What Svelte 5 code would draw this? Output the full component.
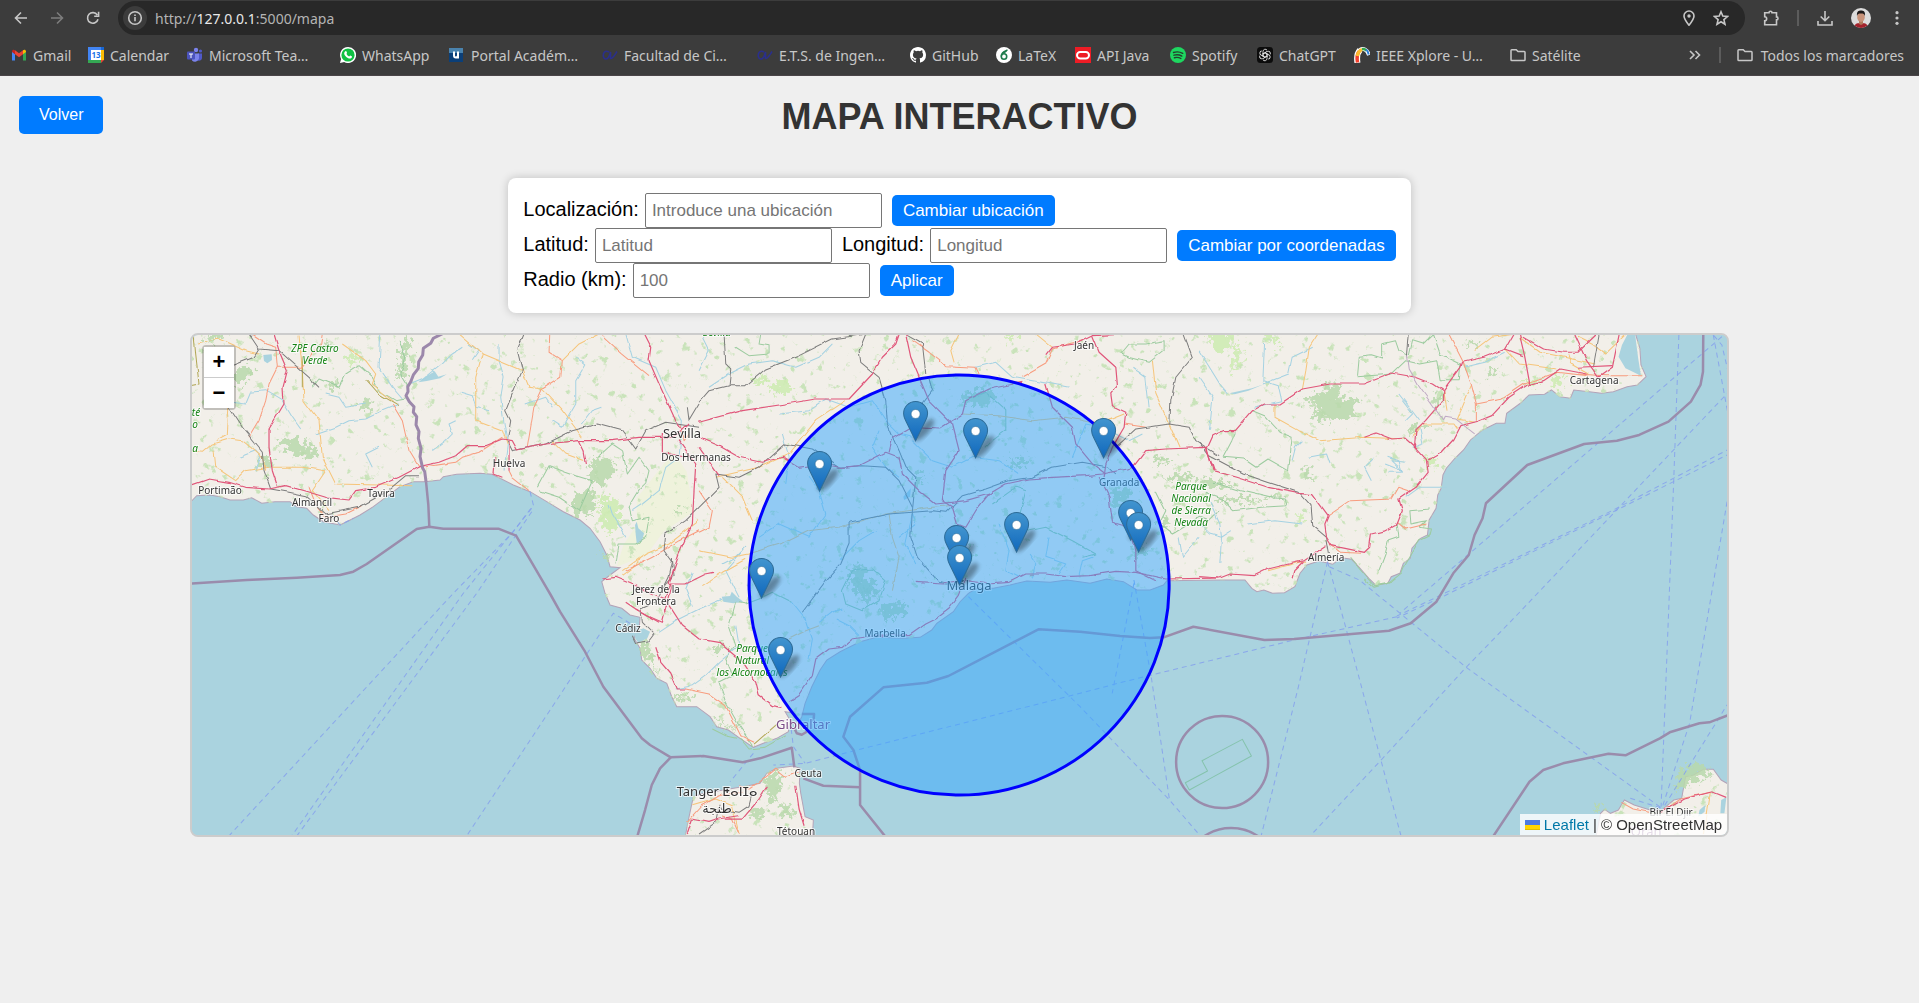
<script>
  const bookmarks = [
    { icon: 'gmail', label: 'Gmail' },
    { icon: 'calendar', label: 'Calendar' },
    { icon: 'teams', label: 'Microsoft Tea…' },
    { icon: 'whatsapp', label: 'WhatsApp' },
    { icon: 'portal', label: 'Portal Académ…' },
    { icon: 'uma', label: 'Facultad de Ci…' },
    { icon: 'uma', label: 'E.T.S. de Ingen…' },
    { icon: 'github', label: 'GitHub' },
    { icon: 'latex', label: 'LaTeX' },
    { icon: 'oracle', label: 'API Java' },
    { icon: 'spotify', label: 'Spotify' },
    { icon: 'chatgpt', label: 'ChatGPT' },
    { icon: 'ieee', label: 'IEEE Xplore - U…' },
    { icon: 'folder', label: 'Satélite' }
  ];

  // Survey sheets: origin and units per map pixel. All geometry is stored in sheet units.
  const sheets = {
    W: [180, 325, 3, 3],
    C: [700, 325, 3, 3],
    E: [1200, 325, 2.904, 3],
    S: [560, 560, 3, 3],
    D: [1120, 580, 2.529, 3]
  };
  // "W 1,2 3,4 S 5,6" -> "x,y x,y x,y" in map units
  function project(text) {
    let s = sheets.W;
    const out = [];
    for (const token of text.trim().split(/\s+/)) {
      if (sheets[token]) s = sheets[token];
      else {
        const [x, y] = token.split(',').map(Number);
        out.push(`${(s[0] + x / s[2]).toFixed(1)},${(s[1] + y / s[3]).toFixed(1)}`);
      }
    }
    return out.join(' ');
  }

  const land = [
    'W -60,-60 -60,520 33,530 50,512 90,510 120,515 150,525 190,525 215,518 245,535 285,530 330,530 350,545 380,550 400,570 430,590 480,600 500,590 540,570 580,545 620,515 660,485 700,470 735,470 780,465 790,455 830,448 900,445 935,448 960,460 1000,480 1050,500 1100,530 1150,560 1200,585 1230,610 1260,650 1280,690 1290,725 1320,728 1290,750 1265,770 S 125,65 135,100 150,135 185,145 210,165 240,172 238,200 222,235 240,265 245,300 270,325 290,355 320,370 335,410 350,440 410,440 450,470 470,500 505,510 540,535 580,562 610,550 650,535 685,515 690,480 675,455 705,460 715,490 725,470 735,430 755,380 780,330 800,300 840,275 900,245 950,232 1030,235 1080,232 1115,210 1130,190 1180,155 1200,125 1225,100 C 830,790 880,790 930,780 980,768 1050,772 1100,765 1170,775 1220,762 1270,770 1310,795 1350,795 1390,780 1400,767 E 60,765 130,765 150,790 165,800 185,795 210,805 245,803 275,785 290,745 310,720 345,708 385,718 410,698 440,703 460,725 490,760 510,780 545,775 555,755 580,745 590,715 610,700 615,670 640,640 660,630 665,585 685,550 690,510 700,490 705,450 715,430 740,400 765,375 785,345 820,315 860,295 885,295 890,265 930,235 955,210 1000,208 1020,195 1045,215 1075,220 1085,195 1130,200 1165,205 1200,200 1240,185 1270,180 1295,155 1280,120 1277,70 1265,30 1265,-60',
    'S 370,860 385,780 400,710 430,700 490,690 560,678 600,670 620,640 650,625 700,618 720,625 718,670 722,700 735,770 760,780 755,860',
    'D 1200,790 1215,700 1225,688 1240,700 1260,690 1275,660 1300,675 1340,690 1370,690 1400,660 1420,655 1430,590 1450,585 1475,568 1500,568 1520,600 1560,628 1560,790'
  ];
  const water = [
    'E 1245,20 1225,60 1215,95 1235,130 1280,152 1272,100 1262,20',
    'S 225,215 250,205 270,215 262,235 235,248 225,235',
    'W 1365,600 1370,590 1375,610 1392,625 1385,650 1370,655 1367,630',
    'W 250,90 275,88 276,105 262,115 252,108',
    'W 735,155 760,142 750,130 765,140 775,155 800,148 780,160 740,168 715,172',
    'S 485,110 510,108 515,95 530,110 550,125 520,130 490,125',
    'C 610,515 632,490 630,515 612,525',
    'E 85,205 150,190 185,178 140,197 100,208',
    'D 1465,690 1480,675 1478,695 1462,710',
    'D 1520,660 1533,652 1528,700 1518,700'
  ];
  const woods = [
    'W 185,155 225,138 238,160 220,190 190,205 178,180',
    'W 315,365 370,360 420,385 435,415 400,425 370,410 330,390',
    'W 250,420 300,425 290,450 255,445',
    'W 465,190 495,185 500,205 475,215',
    'W 1260,420 1320,425 1325,460 1290,505 1255,490 1250,450',
    'W 1205,530 1260,510 1270,580 1215,590 1195,570',
    'W 670,180 690,70 715,60 700,130 690,180',
    'W 85,50 150,45 160,60 110,70',
    'W 430,90 470,70 480,85 450,100',
    'W 560,250 590,240 600,270 570,280',
    'W 1500,580 1530,570 1530,590',
    'S 145,0 175,5 175,20 150,18',
    'S 480,280 510,270 500,300 480,300',
    'S 255,260 290,265 300,330 325,370 300,345 270,310',
    'S 355,430 410,425 410,440 360,440',
    'S 480,490 510,510 550,530 540,530 490,505',
    'S 635,670 680,650 685,700 650,760 640,720',
    'S 690,750 725,770 720,790 680,790',
    'S 600,760 640,770 620,800 590,790',
    'S 880,80 920,70 930,110 900,120',
    'S 920,100 960,110 950,150 920,140',
    'S 980,155 1055,145 1065,185 1010,195 980,180',
    'C 810,230 870,208 910,230 890,260 840,258 810,250',
    'C 665,470 690,460 688,495 665,505',
    'C 950,430 1000,410 1000,440 960,450',
    'C 800,690 835,680 835,720 805,730',
    'C 465,760 500,735 520,770 490,800',
    'C 500,790 550,780 545,830 510,820',
    'C 1250,520 1290,505 1320,520 1300,550 1260,560',
    'C 1320,680 1355,680 1360,710 1325,720',
    'C 1400,480 1450,465 1500,475 1460,490',
    'C 1395,610 1425,600 1430,620 1400,630',
    'C 1385,420 1425,415 1430,435 1390,440',
    'E 345,235 370,225 390,195 430,205 425,240 480,245 465,270 465,300 430,310 390,300 370,280 350,265',
    'E 310,230 340,235 345,260 320,250',
    'E 345,275 375,285 385,312 350,305',
    'E 320,445 338,445 342,490 325,480',
    'E 20,480 80,490 120,505 80,510 20,505',
    'E 60,545 130,535 200,545 250,530 255,540 180,550 70,555',
    'E 695,240 730,220 725,250 705,275',
    'E 850,165 890,145 880,160 860,180',
    'E 630,325 670,320 660,340 620,345',
    'E 790,75 830,65 820,85 795,85',
    'D 1430,590 1480,568 1515,600 1480,620 1420,650',
    'D 1215,700 1228,688 1240,702 1218,710'
  ];
  const scrub = [
    'C 170,180 215,175 220,200 180,200',
    'C 230,195 270,185 305,210 280,225 240,230',
    'C 935,38 968,35 972,60 940,65',
    'E 35,32 150,32 120,65 80,110 55,80',
    'E 115,85 138,85 138,150 118,160',
    'E 210,45 260,45 240,80 215,65',
    'W 1280,530 1335,545 1345,600 1310,650 1275,600',
    'W 515,120 555,105 565,125 530,135',
    'E 950,190 1005,188 1000,202 960,202',
    'E 1045,170 1075,175 1070,210 1045,205',
    'E 305,590 325,585 322,605 300,600',
    'E 670,418 710,418 706,445 675,438'
  ];
  const marsh = ['W 1370,520 1480,380 1520,440 1540,560 1450,620 1400,690 1310,725 1330,660 1370,600'];
  const parks = [
    'W 1075,490 1110,425 1160,445 1190,455 1240,470 1200,560 1140,520 1080,500',
    'W 1255,400 1300,360 1330,380 1345,450 1380,400 1410,440 1400,480 1380,500 1350,550 1360,590 1410,580 1400,640 1370,660 1320,660 1310,720',
    'W 400,190 420,165 480,190 500,150 540,125 580,160 600,200 650,230 680,225',
    'W 660,50 680,100 665,150 690,190',
    'S 530,130 510,200 530,260 500,300 520,350 480,370 500,430 540,500 580,560',
    'S 460,510 500,530 545,540 570,570 620,565 680,530',
    'S 530,130 560,135 600,120 640,100 700,130',
    'E 460,155 465,100 500,95 530,105 530,60 570,50 580,80 610,95 620,50 650,60 680,30 700,90 760,120 755,170 700,170 690,110 640,120 600,110 560,150 460,158',
    'E 155,260 190,275 235,325 270,340 260,440 200,405 165,430 130,405 70,400 95,350 105,325',
    'E 440,700 510,785 550,778 590,745 600,720 640,650 670,635 675,615 640,610 660,590 615,600 612,560 670,555',
    'E 520,745 540,690 550,650 580,640 575,600',
    'E 20,505 60,520 100,560 180,550 255,545 250,525 200,520 120,500 40,475',
    'C 1265,90 1290,60 1340,60 1395,50 1395,80 1350,115 1290,100 1270,90',
    'C 880,540 950,490 980,500 960,580 990,620 1040,610 1120,650 1190,690 1150,700',
    'C 800,230 860,205 920,260 920,320 880,350 860,370',
    'C 110,70 150,95 210,90 210,65 180,60 185,30',
    'C 1370,500 1400,560 1380,600 1420,630 1470,600 1500,580 1530,590 1560,560',
    'C 430,800 460,740 520,735 560,770 540,830 490,860 440,840 430,800',
    'D 620,0 645,25 690,10'
  ];
  const rivers = [
    'W 160,235 200,240 215,205 260,200 310,230 340,280 365,315',
    'W 410,330 470,310 510,290 560,285 610,260 660,240',
    'W 690,180 740,160 790,120 820,90 850,70',
    'W 845,205 880,215 890,250 930,260',
    'W 760,380 800,350 820,330 810,300 830,290',
    'W 960,60 960,110 975,160 965,220 975,300 985,360 975,440',
    'W 1195,100 1220,120 1190,170 1190,240 1150,310 1120,290',
    'W 1340,30 1360,100 1430,130 1460,200 1510,290 1500,400 1460,430 1440,500 1390,540 1360,560',
    'W 605,32 600,130 640,190 670,225',
    'W 1290,540 1300,570 1330,620 1340,640',
    'W 180,400 230,380 245,400 230,440',
    'W 580,430 560,390 600,370',
    'W 440,210 480,220 500,250 560,240',
    'W 870,60 900,80 880,110',
    'W 1040,240 1100,220 1120,250',
    'W 1210,300 1240,260 1270,250',
    'S 350,390 400,380 440,350 480,310 540,260 530,200',
    'S 300,220 360,180 420,150 490,120',
    'S 700,130 740,180 760,240 750,300',
    'S 830,180 870,200 900,230',
    'S 780,190 820,160 850,150',
    'S 400,40 380,90 400,140',
    'C 0,140 30,80 10,40',
    'C 30,190 90,150 150,120 220,110 290,130 360,100 400,60',
    'C 240,270 330,260 380,225 450,250 520,230 560,290 600,330 640,340',
    'C 640,350 700,410 760,430 820,400 900,410 960,450',
    'C 540,320 520,370 560,430 600,460',
    'C 180,640 240,600 330,640 380,570 360,500 330,460',
    'C 70,720 110,700 140,670 80,740 120,820',
    'C 600,640 650,600 640,570 620,660 650,720',
    'C 830,130 890,115 940,160 1000,170 1060,180 1110,190',
    'C 1120,400 1160,300 1210,310 1290,350 1330,330',
    'C 1050,640 1040,700 1100,720 1080,750',
    'C 900,600 930,680 920,740 960,760',
    'C 1000,760 1010,720 990,690',
    'C 1140,755 1150,710 1180,700',
    'C 420,710 480,650 530,620',
    'C 1440,640 1450,700 1500,640',
    'C 250,330 270,400 260,480',
    'C 1300,130 1340,160 1350,250',
    'E 0,160 40,220 30,320',
    'E 185,180 260,150 270,100 330,70',
    'E 190,60 185,170 230,185 240,230 160,250',
    'E 0,80 60,180 85,210',
    'E 580,210 610,250 640,290',
    'E 590,230 620,270 600,290',
    'E 640,310 650,360 620,370',
    'E 540,420 590,440 560,410 600,415',
    'E 550,400 580,410 590,445 550,445',
    'E 30,530 60,600 65,640 60,720',
    'E 0,600 30,630 65,640 95,620',
    'E 140,600 220,590 300,600',
    'E 500,470 480,430 510,400',
    'E 770,130 830,115 890,85',
    'E 320,400 370,390 380,420',
    'E 270,410 280,370 300,350',
    'E 720,490 640,490 600,520'
  ];
  const yellow = [
    'W 33,380 70,385 100,360 150,345 190,350 215,370 250,400 260,440',
    'W 60,60 120,45 200,80 240,90',
    'W 360,35 370,140 375,230 420,290 430,400 470,480 700,485',
    'W 490,60 560,110 590,150 580,180 640,230',
    'W 280,430 370,430 440,440 400,500 450,560',
    'W 105,380 110,430 170,470 200,440 270,430',
    'W 840,30 910,90 1030,140 1050,190 1090,195 1150,260 1210,340',
    'W 1260,30 1200,60 1150,110',
    'W 910,90 890,160 890,290 970,320 985,360',
    'W 1120,350 1160,390 1215,410',
    'W 150,240 145,330 110,350',
    'W 1330,740 1400,690 1470,660 1560,590',
    'S 190,50 230,20 240,0',
    'S 430,80 490,40 560,0',
    'S 690,240 740,215 780,200',
    'C 0,680 100,700 150,690 210,670 260,655 330,620 420,610 560,570 700,550 750,545',
    'C 50,460 180,430 270,390 350,290 440,230',
    'C 70,460 130,520 160,590',
    'C 570,570 580,640 600,700 580,800',
    'C 790,270 900,275 1000,290 1100,280 1200,300 1275,270',
    'C 780,30 755,80 765,115',
    'C 1010,30 1060,70',
    'C 1360,110 1370,210 1410,300 1440,370',
    'E 345,30 320,70 310,140 300,195',
    'E 220,240 220,280 290,320 350,350 480,340 600,345',
    'E 620,340 650,300 740,300 750,315',
    'E 790,185 750,285 800,295',
    'E 710,200 720,260',
    'E 890,75 930,120 1040,135',
    'E 930,40 990,85 1040,95 1150,120',
    'E 1070,90 1080,120 1130,150',
    'E 200,740 290,715 310,715',
    'E 800,80 850,40 920,30',
    'E 1240,30 1180,90 1140,60 1100,40',
    'D 1480,765 1495,640',
    'S 400,740 470,720 520,740 540,825'
  ];
  const orange = [
    'W 215,30 260,60 290,70 295,130 270,180 260,230 240,290 210,340',
    'W 295,130 370,130 425,60 430,30',
    'W 640,240 670,290 690,380 720,430',
    'W 740,428 830,415 850,400 900,385 970,340',
    'W 1045,370 1065,250 1090,195 1145,160 1150,110 1110,85 1112,30',
    'W 1270,35 1330,90 1410,155',
    'W 990,440 1000,460 1050,500',
    'W 390,490 410,540 440,580 500,570 550,545',
    'W 1340,740 1420,700 1500,650 1560,620',
    'S 380,390 450,405 500,440 525,490 545,530 585,550',
    'S 540,680 570,690 600,670 650,630 680,655 715,640',
    'S 385,790 430,740 480,710 550,700',
    'S 540,825 520,780 490,770',
    'C 640,50 690,85 740,125 830,130 840,150',
    'C 970,160 1040,120 1060,75 1110,60 1150,50',
    'C 1275,300 1340,310',
    'C 0,500 40,560 30,610 0,625',
    'E 725,30 765,110 790,180 805,240 805,290',
    'E 805,240 880,225 945,180 1040,145 1130,155',
    'E 1100,150 1180,155 1290,155',
    'E 375,575 440,530 560,525 580,490 610,500',
    'E 575,595 600,615 660,600',
    'E 380,660 410,685 470,688',
    'D 1270,670 1300,690 1340,700',
    'D 1370,700 1420,660 1495,640',
    'W 1505,300 1515,350 1530,330'
  ];
  const red = [
    'W 285,30 300,80 325,140 312,190 315,240 270,315 270,370 280,440 295,485',
    'W 33,485 90,465 150,475 200,490 270,495 320,485 390,505 440,520 510,528 530,500 590,490 660,460 720,428 780,415 830,395 865,365 920,365 970,345 1000,350 1015,378 1100,360 1200,350 1300,350 1380,340 1480,340 1510,320',
    'W 950,400 945,450 970,460',
    'W 1395,30 1415,70 1410,110 1440,180 1490,290 1510,320 1530,300',
    'W 1200,350 1215,380 1222,420',
    'W 1500,350 1550,420 1545,500 1540,600 1500,690 1470,780',
    'W 990,350 990,440',
    'W 1450,330 1450,385 1520,400',
    'S 130,60 170,55 220,75 270,100 320,120 335,75 380,75 440,45 465,40',
    'S 230,150 265,170 310,190 325,130 370,200 420,240 480,250 550,310 590,370 600,410 640,440 670,445',
    'S 200,130 230,150 300,190',
    'S 290,265 305,310 335,345 355,390 380,390',
    'S 340,75 320,160',
    'S 500,780 550,780 600,720 625,680',
    'S 710,680 720,750 735,800',
    'S 385,825 400,780 450,790 480,780 540,770',
    'C 0,295 130,260 260,240 350,225 450,225 520,150 550,100 590,60 600,32',
    'C 620,30 635,100 660,160 690,230 760,300 780,380 740,440 730,530 760,550 775,600 800,610 830,560 870,510',
    'C 0,340 60,365 120,400 190,415 250,400 300,430 370,420 430,430 480,425 560,385 600,400 610,450 660,500 710,540 800,530 870,510 920,480 990,465 1060,460 1160,455 1210,450 1300,432',
    'C 0,370 60,455',
    'C 570,385 580,345 640,310 720,315 790,270 800,230 870,195 970,175',
    'C 1180,35 1200,85 1250,130 1255,185 1235,210 1240,245 1280,265 1275,310 1240,370 1220,420 1215,460',
    'C 1040,180 1060,250 1120,310 1130,360 1180,420 1220,450',
    'C 1300,432 1340,380 1400,375 1520,370 1545,440',
    'C 1200,460 1230,520 1240,595 1290,610 1310,680 1310,740 1370,770',
    'C 650,775 730,780 800,770 870,780 930,775 980,750 1040,750 1100,758 1170,755 1250,742 1310,745 1400,765 1560,762',
    'S 690,430 720,410 760,350 770,300 810,270 850,265 880,240 960,228 1050,230 1100,195 1130,180 1170,150 1200,110 1220,60',
    'C 1040,95 1060,70 1130,60 1180,35 1250,32',
    'E 0,370 25,370 40,335 70,320 105,320 155,260 190,240 235,240 300,195 380,180 480,180 560,147 630,160 680,180 710,200',
    'E 710,200 710,230 660,290 630,320 625,370 660,410 665,445 630,490 580,525 590,560 575,600 540,620 500,630 495,670 480,685 385,665 370,640 365,600 375,575',
    'E 22,370 40,440 110,460 200,490 290,508 330,512 375,575',
    'E 480,340 515,327 560,345 600,342 625,365',
    'E 0,758 60,762 90,750 160,755 200,735 260,720 305,710 370,665',
    'E 665,410 700,390 740,345 760,305 810,292 850,275 900,220 950,185 1000,170 1050,135 1125,150',
    'E 710,200 760,130 765,115 830,100 890,75 915,30',
    'E 930,30 945,95 960,180',
    'E 940,40 1000,75 1060,85 1100,85 1155,30',
    'E 890,75 940,95',
    'E 1090,30 1125,110 1160,160 1200,130 1220,30',
    'E 1100,130 1200,125',
    'E 270,760 275,740 300,715',
    'D 1370,700 1430,660 1500,638 1535,655'
  ];
  const rails = [
    'W 210,30 240,75 300,80 350,125 390,160 420,190',
    'W 240,75 225,100 160,125',
    'W 150,250 190,310 250,385 255,440 275,495 330,505 380,515 440,570 540,550 620,505 680,455 720,455',
    'W 1035,30 1015,80 1030,140 1000,210 980,260 995,290 985,350 1000,380 1100,360 1180,320 1255,300 1330,320 1370,375 1400,320 1460,295 1560,310',
    'W 1560,550 1520,590 1460,630 1455,680 1480,715 1470,760 1450,800',
    'W 1525,250 1530,290 1560,240',
    'S 340,0 345,50 310,90 290,130 245,150 250,190 285,225 270,245 230,252 220,230',
    'S 420,825 470,790 480,740',
    'S 480,750 540,760 570,740 580,700',
    'C 0,235 30,200 90,185 140,185 200,135 300,95 400,45 490,32',
    'C 75,30 80,120 95,135 90,185',
    'C 500,30 480,80 485,115 540,160 560,230 565,300 600,380 620,430 650,460 640,560 635,640 655,700 720,775 780,790',
    'C 620,32 670,60 680,150',
    'C 0,550 60,490 50,450 120,460 180,430 260,360 340,375 420,430 490,425 560,430 600,470 640,550',
    'C 450,595 570,570 700,560 740,565 790,515 860,495 930,470 1000,460 1060,430 1150,415 1230,430 1250,450',
    'C 450,595 450,660 425,720 380,770 310,865',
    'C 1250,370 1310,315 1410,300 1470,310 1490,350 1560,395',
    'C 1455,32 1480,100 1430,160 1415,230 1412,300',
    'C 690,165 700,200 670,240',
    'E 0,355 30,395 130,450 200,475 290,505 325,545 330,605 370,640 378,690',
    'E 610,30 605,95',
    'E 1162,30 1145,130'
  ];
  const olive = ['W 560,165 600,210 660,245', 'W 45,30 50,90 60,180 33,185', 'S 585,555 660,490', 'W 370,100 370,190'];
  const limits = ['E 605,95 610,135 640,190 710,290 715,280 745,285 800,330'];
  const maritime = [
    'W -20,779 200,765 350,758 480,750 520,740 560,717 710,612 748,605 790,611 955,611 1008,632 1112,810 S 0,155 75,275 130,380 245,535 270,555 332,592 430,588 548,607 600,595 695,563 703,622',
    'S 332,592 300,625 275,675 255,750 230,835',
    'S 730,655 790,677 900,682',
    'S 980,835 900,735 900,630 880,570 850,530 870,470 970,382 1100,368 1165,348 1435,208 1560,215 D 0,168 75,174 110,172 185,140 365,180 440,177 680,152 735,130 800,65 E 735,745 780,690 797,630 820,580 830,535 950,420 1115,357 1210,347 1275,330 1360,290 1425,230 1453,180 1460,140 1461,20',
    'D 940,775 1035,605 1070,570 1120,550 1235,521 1278,526 1365,475 1390,457 1465,430 1490,427 1545,402',
    'S 725,462 762,462 760,485',
    'S 740,515 725,524 710,520 703,505',
    'W 748,605 745,540 738,470'
  ];
  const frontier = ['W 738,470 734,440 728,430 720,395 723,370 715,340 717,320 708,300 710,275 700,262 702,245 688,230 678,212 684,200 683,185 692,170 700,150 715,130 716,110 728,90 730,70 752,55 760,40 790,25'];
  const ferries = [
    'W 1050,500 1060,540 1000,620 820,805 140,1540',
    'W 1055,550 850,805 330,1540',
    'W 1055,560 890,805 345,1540',
    'S 210,190 160,160 0,405 -285,835',
    'E 1515,35 580,865',
    'E 1390,30 1375,470 1360,870 D 1368,680',
    'E 1490,30 1535,280',
    'E 1540,370 1200,555 700,810 D 700,108',
    'E 1540,385 1200,560 710,812 D 700,114',
    'E 1540,170 1515,60 1490,30',
    'E 1540,195 920,870 D 875,262 660,540 475,775',
    'E 1530,530 D 1440,430 1370,685',
    'E 370,710 D 450,325 355,775',
    'E 370,710 D 570,140 712,775',
    'E 375,725 D 605,0 875,262 1370,685',
    'D 700,110 440,180 0,308 S 1560,400 735,610 640,615',
    'D 1540,365 1375,680',
    'D 1290,655 1370,685',
    'D 35,0 80,300 125,660',
    'D 35,10 -20,340',
    'S 1225,110 1560,440 D 125,660 208,775',
    'S 690,480 700,560 735,610',
    'S 580,580 510,665',
    'W 455,570 480,600 520,580'
  ];

  const layers = [
    ['park', parks], ['river', rivers], ['yellow', yellow], ['olive', olive],
    ['orange', orange], ['rail', rails], ['red', red], ['limit', limits]
  ];

  const places = [
    ['area', 315, 352, 'ZPE Castro'], ['area', 315, 364, 'Verde'],
    ['area', 196, 416, 'té'], ['area', 195, 428, 'o'], ['area', 195, 452, 'a'],
    ['area', 717, 336, 'Sevilla'],
    ['town', 220, 494, 'Portimão'], ['town', 312, 506, 'Almancil'], ['town', 329, 522, 'Faro'],
    ['town', 381, 497, 'Tavira'], ['town', 509, 467, 'Huelva'], ['city', 682, 438, 'Sevilla'],
    ['town', 696, 461, 'Dos Hermanas'], ['town', 656, 593, 'Jerez de la'], ['town', 656, 605, 'Frontera'],
    ['town', 628, 632, 'Cádiz'], ['area', 752, 652, 'Parque'], ['area', 752, 664, 'Natural'],
    ['area', 752, 676, 'los Alcornocales'], ['town', 885, 637, 'Marbella'], ['city', 969, 590, 'Málaga'],
    ['state', 803, 729, 'Gibraltar'], ['town', 808, 777, 'Ceuta'], ['city', 717, 796, 'Tanger ⵟⴰⵏⵊⴰ'],
    ['city', 717, 813, 'طنجة'], ['town', 796, 835, 'Tétouan'], ['town', 1084, 349, 'Jaén'],
    ['town', 1119, 486, 'Granada'], ['area', 1191, 490, 'Parque'], ['area', 1191, 502, 'Nacional'],
    ['area', 1191, 514, 'de Sierra'], ['area', 1191, 526, 'Nevada'], ['town', 1326, 561, 'Almería'],
    ['town', 1594, 384, 'Cartagena'], ['town', 1671, 816, 'Bir El Djir'], ['state', 1646, 836, 'Oran']
  ];

  const markers = [
    [915, 441], [975, 458], [1103, 458], [819, 491], [1130, 540], [1016, 552],
    [1138, 552], [956, 565], [959, 585], [761, 598], [780, 677]
  ];

  let ubicacion = $state('');
  let latitud = $state('');
  let longitud = $state('');
  let radio = $state('');
</script>

{#snippet bookmarkIcon(name)}
  <svg class="fav" viewBox="0 0 16 16" aria-hidden="true">
    {#if name === 'gmail'}
      <path fill="#4285f4" d="M1 13.5V4.5l3 2.2v6.8z" /><path fill="#34a853" d="M12 13.5V6.7l3-2.2v9z" />
      <path fill="#c5221f" d="M1 4.7C1 2.6 2.700 2.200 4 3.200v4L1 5z" /><path fill="#fbbc04" d="M15 4.700c0-2.100-1.700-2.500-3-1.500v4L15 5z" />
      <path fill="#ea4335" d="M4 3.200 8 6.200l4-3v4L8 10.200l-4-3z" />
    {:else if name === 'calendar'}
      <path fill="#4285f4" d="M0 0h13v3H3v10H0z" /><path fill="#fbbc04" d="M13 3h3v10h-3z" /><path fill="#1967d2" d="M13 0h3v3h-3z" />
      <path fill="#34a853" d="M0 13h13v3H0z" /><path fill="#ea4335" d="M13 13h3l-3 3z" /><path fill="#fff" d="M3 3h10v10H3z" />
      <text x="8" y="11" text-anchor="middle" font-size="8" font-weight="700" fill="#1a73e8">13</text>
    {:else if name === 'teams'}
      <circle cx="9" cy="3" r="2.200" fill="#7b83eb" /><circle cx="13.500" cy="4" r="1.600" fill="#5059c9" />
      <path fill="#5059c9" d="M11 6.500h4v4.500a2.800 2.800 0 0 1-4 2.500z" /><path fill="#7b83eb" d="M5 6.500h7v5a4.200 4.200 0 0 1-7 2z" />
      <rect y="4.500" width="8" height="8" rx="1" fill="#4b53bc" /><path fill="#fff" d="M2 6.500h4v1H4.500V11h-1V7.500H2z" />
    {:else if name === 'whatsapp'}
      <path fill="#fff" d="M8 0a8 8 0 1 1-3.800 15L0 16l1.100-4A8 8 0 0 1 8 0z" /><circle cx="8" cy="8" r="6.600" fill="#0fc143" />
      <path fill="#fff" d="M5.500 4.200c.6-.4.900 0 1.500 1.500.2.500-.7 1-.5 1.300.6 1.100 1.400 1.900 2.600 2.400.4.200.8-1 1.200-.8 1.600.8 1.900.9 1.600 1.700-.5 1.500-2.400 1.600-4.100.7C5.600 9.800 4.300 8 4.200 6.500c0-1 .6-2 1.300-2.300z" />
    {:else if name === 'portal'}
      <rect x="0" y="1" width="14" height="14" fill="#0b3f78" /><rect x="0" y="1" width="14" height="5" fill="#4a83ae" />
      <path d="M5 4.500v4q0 2 1.800 2T9 8.500v-4M9 8v3.500" fill="none" stroke="#fff" stroke-width="2" />
    {:else if name === 'uma'}
      <path d="M7 5C1 1.500-.500 11 3.500 12c3 .500 4-3 5-7v6.500c2 .500 4-3 6.500-7" fill="none" stroke="#2a2f8c" stroke-width="1.600" />
    {:else if name === 'github'}
      <path fill="#fff" d="M8 0C3.580 0 0 3.580 0 8c0 3.540 2.290 6.530 5.470 7.590.4.070.55-.17.55-.38 0-.19-.01-.82-.01-1.490-2.010.37-2.530-.49-2.690-.94-.09-.23-.48-.94-.82-1.130-.28-.15-.68-.52-.01-.53.63-.01 1.080.58 1.230.82.72 1.210 1.870.87 2.330.66.07-.52.28-.87.510-1.070-1.780-.2-3.640-.89-3.640-3.950 0-.87.31-1.590.82-2.150-.08-.2-.36-1.020.08-2.120 0 0 .67-.21 2.200.82a7.600 7.600 0 0 1 4 0c1.530-1.040 2.200-.82 2.200-.82.44 1.100.16 1.920.08 2.120.51.56.82 1.270.82 2.150 0 3.070-1.870 3.750-3.650 3.950.29.25.54.73.54 1.480 0 1.070-.01 1.930-.01 2.200 0 .21.15.46.55.38A8 8 0 0 0 16 8c0-4.420-3.580-8-8-8z" />
    {:else if name === 'latex'}
      <circle cx="8" cy="8" r="8" fill="#fff" /><circle cx="8" cy="9.500" r="2.700" fill="none" stroke="#1e7b4c" stroke-width="1.600" />
      <path d="M5.300 9.500C5 6 7.500 4.500 11.500 3M7 5c1 .500 3 .300 4-2" fill="none" stroke="#1e7b4c" stroke-width="1.400" />
    {:else if name === 'oracle'}
      <rect width="16" height="16" fill="#ee1c25" /><rect x="2" y="5" width="12" height="6.500" rx="3.200" fill="none" stroke="#fff" stroke-width="2" />
    {:else if name === 'spotify'}
      <circle cx="8" cy="8" r="8" fill="#1ed760" />
      <path d="M3.500 5.500c3-1 6.500-.700 9.200.8M4 8.200c2.700-.8 5.500-.5 7.800.9M4.400 10.700c2.300-.6 4.500-.4 6.500.8" fill="none" stroke="#24402d" stroke-width="1.400" stroke-linecap="round" />
    {:else if name === 'chatgpt'}
      <rect width="16" height="16" rx="3.500" fill="#0c0c0c" />
      <g fill="none" stroke="#e8e8e8" stroke-width=".9">
        {#each [0, 60, 120, 180, 240, 300] as a (a)}
          <path d="M8 5.700 10 6.900V10M6 6.800V4.400a2.200 2.200 0 0 1 4-1.200" transform="rotate({a} 8 8)" />
        {/each}
      </g>
    {:else if name === 'ieee'}
      <path d="M3.500 16C2.500 10 3.500 5.500 6 3" fill="none" stroke="#fff" stroke-width="6" />
      <path d="M6 3c3-2 7-1 9 5" fill="none" stroke="#fff" stroke-width="4" />
      <path d="M3.500 15.500C2.500 10 3.500 6.500 5 4.500" fill="none" stroke="#f4402c" stroke-width="3.500" />
      <path d="M3.300 9C3.800 6 5.500 3.500 8 2.500" fill="none" stroke="#fdbb2d" stroke-width="3.500" />
      <path d="M8 2.200c2-.3 3.500.3 4.500 1.500" fill="none" stroke="#35a853" stroke-width="2.500" />
      <path d="M12 2.500c1.500 1 2.300 2.500 2.700 5" fill="none" stroke="#2d7fd8" stroke-width="2" />
    {:else}
      <path d="M1 3.500q0-.8.800-.8h4.400L8 4.500h6.200q.8 0 .8.800v7.400q0 .8-.8.800H1.800q-.8 0-.8-.8z" fill="none" stroke="#c7c7c7" stroke-width="1.500" />
    {/if}
  </svg>
{/snippet}

<header class="browser">
  <div class="toolbar">
    <div class="nav">
      <button class="tool" aria-label="Atrás"><svg viewBox="0 0 16 16"><path d="M14 8H3M8 2.500 2.500 8 8 13.500" /></svg></button>
      <button class="tool dim" aria-label="Adelante"><svg viewBox="0 0 16 16"><path d="M2 8h11M8 2.500 13.500 8 8 13.500" /></svg></button>
      <button class="tool" aria-label="Recargar"><svg viewBox="0 0 16 16"><path d="M13 9.200A5.300 5.300 0 1 1 12.300 5M13.600 1.800v4.400H9.200" /></svg></button>
    </div>
    <div class="omnibox">
      <button class="tool site" aria-label="Información del sitio"><svg viewBox="0 0 16 16"><circle cx="8" cy="8" r="6.300" /><path d="M8 7v4.300M8 4.500V6" /></svg></button>
      <span class="url">http://<b>127.0.0.1</b>:5000/mapa</span>
      <button class="tool" aria-label="Ubicación"><svg viewBox="0 0 16 16"><path d="M8 15.200C5 11.500 3 8.800 3 6a5 5 0 0 1 10 0C13 8.800 11 11.500 8 15.200z" /><circle cx="8" cy="6" r="1.700" class="solid" /></svg></button>
      <button class="tool" aria-label="Añadir a marcadores"><svg viewBox="0 0 16 16"><path d="m8 1.800 1.800 4.300 4.700.4-3.600 3.100 1.100 4.600L8 11.700l-4 2.500 1.100-4.600L1.500 6.500l4.700-.4z" /></svg></button>
    </div>
    <div class="actions">
      <button class="tool" aria-label="Extensiones"><svg viewBox="0 0 16 16"><path d="M1.700 2.700h4.300a1.500 1.500 0 0 1 3 0h4.500v4.200a1.500 1.500 0 0 1 0 3v4.800H1.700v-3.900c2.600 0 2.600-4 0-4z" /></svg></button>
      <span class="sep"></span>
      <button class="tool" aria-label="Descargas"><svg viewBox="0 0 16 16"><path d="M8 1v9.500M3.700 6.500 8 10.700l4.300-4.200M1 11v4h14v-4" /></svg></button>
      <button class="tool" aria-label="Perfil">
        <svg class="avatar" viewBox="0 0 20 20"><circle cx="10" cy="10" r="10" fill="#dcdcdc" /><path d="M3.500 17.500C5 15 8 15 10 15s5 0 6.500 2.500A10 10 0 0 1 3.500 17.500z" fill="#a3222c" /><path d="M8 12h4v4l-2 1-2-1z" fill="#b07a5c" /><ellipse cx="10" cy="9" rx="3.800" ry="5" fill="#c8937a" /><path d="M6 8C5.500 3.500 7.500 2.500 10 2.500s4.500 1 4 5.500c-.7-2-1.500-2.500-4-2.500S6.500 6 6 8z" fill="#1d1919" /></svg>
      </button>
      <button class="tool" aria-label="Menú"><svg viewBox="0 0 16 16"><g class="solid"><circle cx="8" cy="2.700" r="1.600" /><circle cx="8" cy="8" r="1.600" /><circle cx="8" cy="13.300" r="1.600" /></g></svg></button>
    </div>
  </div>
  <nav class="bookmarks" aria-label="Marcadores">
    <div class="list">
      {#each bookmarks as item, i (i)}
        <a class="bookmark" href="#{item.icon}">{@render bookmarkIcon(item.icon)}<span>{item.label}</span></a>
      {/each}
    </div>
    <button class="tool more" aria-label="Más marcadores"><svg viewBox="0 0 16 16"><path d="m3 4 4 4-4 4M8.500 4l4 4-4 4" /></svg></button>
    <span class="sep"></span>
    <a class="bookmark all" href="#marcadores">{@render bookmarkIcon('folder')}<span>Todos los marcadores</span></a>
  </nav>
</header>

<main>
  <div class="top">
    <button class="primary back">Volver</button>
    <h1>MAPA INTERACTIVO</h1>
  </div>

  <form class="card" onsubmit={(e) => e.preventDefault()}>
    <div class="row">
      <label for="ubicacion">Localización:</label>
      <input id="ubicacion" type="text" placeholder="Introduce una ubicación" bind:value={ubicacion} />
      <button type="button" class="primary">Cambiar ubicación</button>
    </div>
    <div class="row">
      <label for="latitud">Latitud:</label>
      <input id="latitud" type="text" placeholder="Latitud" bind:value={latitud} />
      <label for="longitud">Longitud:</label>
      <input id="longitud" type="text" placeholder="Longitud" bind:value={longitud} />
      <button type="button" class="primary">Cambiar por coordenadas</button>
    </div>
    <div class="row">
      <label for="radio">Radio (km):</label>
      <input id="radio" type="text" placeholder="100" bind:value={radio} />
      <button type="button" class="primary">Aplicar</button>
    </div>
  </form>

  <section class="map" aria-label="Mapa">
    <svg class="canvas" viewBox="192 335 1535 500" preserveAspectRatio="xMidYMid slice">
      <defs>
        <filter id="rough" filterUnits="userSpaceOnUse" x="180" y="325" width="1560" height="520">
          <feTurbulence type="fractalNoise" baseFrequency="0.08" numOctaves="2" seed="4" />
          <feDisplacementMap in="SourceGraphic" scale="5" xChannelSelector="R" yChannelSelector="G" color-interpolation-filters="sRGB" />
        </filter>
        <filter id="ragged" filterUnits="userSpaceOnUse" x="180" y="325" width="1560" height="520">
          <feTurbulence type="fractalNoise" baseFrequency="0.2" numOctaves="3" seed="9" />
          <feDisplacementMap in="SourceGraphic" scale="30" xChannelSelector="R" yChannelSelector="G" color-interpolation-filters="sRGB" />
        </filter>
        <filter id="specks" filterUnits="userSpaceOnUse" x="180" y="325" width="1560" height="520" color-interpolation-filters="sRGB">
          <feTurbulence type="fractalNoise" baseFrequency="0.11" numOctaves="4" seed="21" />
          <feColorMatrix values="0 0 0 0 .79  0 0 0 0 .89  0 0 0 0 .73  9 0 0 0 -5.800" />
          <feComposite in2="SourceGraphic" operator="in" />
        </filter>
        <filter id="soft"><feGaussianBlur stdDeviation="2" /></filter>
        <linearGradient id="pin" x1="0" y1="0" x2="0" y2="1">
          <stop offset="0" stop-color="#4295cf" /><stop offset="1" stop-color="#1068bd" />
        </linearGradient>
      </defs>

      <rect class="sea" x="0" y="0" width="1919" height="1200" />
      {#each land as p, i (i)}<polygon class="land" points={project(p)} />{/each}
      {#each marsh as p, i (i)}<polygon class="marsh" points={project(p)} />{/each}
      {#each land as p, i (i)}<polygon class="land" filter="url(#specks)" points={project(p)} />{/each}
      <g filter="url(#ragged)">
        {#each woods as p, i (i)}<polygon class="wood" points={project(p)} />{/each}
        {#each scrub as p, i (i)}<polygon class="scrub" points={project(p)} />{/each}
      </g>
      {#each water as p, i (i)}<polygon class="sea" points={project(p)} />{/each}
      <g filter="url(#rough)">
        {#each layers as [kind, lines] (kind)}
          {#each lines as p, i (i)}<polyline class={kind} points={project(p)} />{/each}
        {/each}
      </g>
      {#each frontier as p, i (i)}<polyline class="frontier" points={project(p)} />{/each}
      {#each ferries as p, i (i)}<polyline class="ferry" points={project(p)} />{/each}
      {#each maritime as p, i (i)}<polyline class="maritime" points={project(p)} />{/each}
      <circle class="maritime" cx="1222" cy="762" r="46" />
      <circle class="maritime" cx="1231" cy="876" r="48" />
      <polygon class="reserve" points={project('D 309,478 332,528 175,630 165,608 221,573 207,542')} />

      {#each places as [kind, x, y, name], i (i)}<text class="place {kind}" {x} {y}>{name}</text>{/each}

      <circle class="range" cx="959" cy="585" r="210" />

      {#each markers as [x, y], i (i)}
        <ellipse cx={x + 9} cy={y - 11} rx="14" ry="5" fill="#000" opacity=".35" filter="url(#soft)" transform="rotate(-48 {x + 9} {y - 11})" />
      {/each}
      {#each markers as [x, y], i (i)}
        <g transform="translate({x - 12} {y - 40})">
          <path d="M12.500.500C5.800.500.500 5.900.500 12.500c0 2.400.800 4.600 1.900 6.800L12.500 40l10.100-20.700c1.100-2.200 1.900-4.400 1.900-6.800 0-6.600-5.300-12-12-12z" fill="url(#pin)" stroke="#2e6c97" stroke-width="1" />
          <circle cx="12.500" cy="13" r="4.500" fill="#fff" stroke="#2e6c97" stroke-width=".6" />
        </g>
      {/each}
    </svg>
    <div class="zoom">
      <button aria-label="Acercar">+</button>
      <button aria-label="Alejar">−</button>
    </div>
    <div class="credit">
      <svg viewBox="0 0 15 10" aria-hidden="true"><path fill="#4c7be1" d="M0 0h15v5H0z" /><path fill="#ffd500" d="M0 5h15v5H0z" /><path fill="#e0bc00" d="M0 9h15v1H0z" /></svg>
      <a href="#leaflet">Leaflet</a> <span>| © OpenStreetMap</span>
    </div>
  </section>
</main>

<style>
  :global(body) { margin: 0; background: #efefef; }
  button, input { font-family: inherit; }

  .browser { background: #3c3c3c; border-bottom: 1px solid #4a4548; font-family: "Noto Sans", sans-serif; font-size: 14px; color: #c7c7c7; }
  .toolbar { display: flex; align-items: center; padding-top: 1px; height: 34px; }
  .nav { display: flex; gap: 20px; padding: 0 17px 0 13px; }
  .tool { display: grid; place-items: center; padding: 0; border: 0; background: none; color: #c7c7c7; }
  .tool svg { width: 16px; height: 16px; fill: none; stroke: currentColor; stroke-width: 1.600; }
  .tool .solid { fill: currentColor; stroke: none; }
  .tool.dim { color: #7d7d7d; }
  .tool svg.avatar { width: 20px; height: 20px; stroke: none; }
  .omnibox { flex: 1; display: flex; align-items: center; gap: 16px; height: 34px; padding: 0 16px 0 5px; border-radius: 17px; background: #282828; }
  .site { width: 24px; height: 24px; border-radius: 50%; background: #3c3c3c; }
  .url { flex: 1; margin-left: -8px; color: #b4b4b4; }
  .url b { font-weight: 400; color: #e8e8e8; }
  .actions { display: flex; align-items: center; gap: 18px; padding: 0 14px 0 18px; }
  .sep { width: 2px; height: 16px; background: #5c5c5c; }
  .bookmarks { display: flex; align-items: center; height: 40px; padding: 0 15px 0 11px; }
  .list { flex: 1; display: grid; grid-template-columns: 77px 99px 153px 109px 153px 155px 153px 86px 79px 95px 87px 97px 156px auto; }
  .bookmark { display: flex; align-items: center; gap: 6px; color: inherit; text-decoration: none; white-space: nowrap; }
  .bookmark.all { gap: 8px; }
  .fav { width: 16px; height: 16px; flex: none; }
  .more { margin-right: 16px; }
  .bookmarks > .sep { margin-right: 16px; }

  main { font-family: "Liberation Sans", Arial, sans-serif; padding: 20px 19px; }
  .top { display: grid; grid-template-columns: 1fr auto 1fr; align-items: start; }
  h1 { margin: 0; font-size: 36px; line-height: 41px; color: #333; }
  .primary { border: 0; border-radius: 5px; background: #007bff; color: #fff; font-size: 17px; line-height: 19px; padding: 6px 11px; }
  .back { justify-self: start; font-size: 16px; line-height: 18px; padding: 10px 20px; }

  .card { width: fit-content; margin: 41px auto 20px; padding: 15px; box-sizing: border-box; background: #fff; border-radius: 8px; box-shadow: 0 0 10px rgba(0, 0, 0, .2); }
  .row { display: flex; align-items: baseline; font-size: 20px; }
  .row input { box-sizing: border-box; width: 237px; height: 35px; margin: 0 10px 0 6px; padding: 1px 6px; border: 1px solid #767676; border-radius: 2px; background: #fff; font-size: 17px; }
  .row input::placeholder { color: #757575; }

  .map { position: relative; width: 80vw; height: 500px; margin: 0 auto; border: 2px solid #ccc; border-radius: 8px; overflow: hidden; background: #aad3df; }
  .canvas { display: block; width: 100%; height: 100%; }
  .zoom { position: absolute; left: 10px; top: 10px; display: grid; border: 2px solid rgba(0, 0, 0, .2); border-radius: 4px; background-clip: padding-box; }
  .zoom button { width: 30px; height: 30px; padding: 0; border: 0; background: #fff; color: #000; font-size: 22px; font-weight: 700; line-height: 30px; }
  .zoom button + button { height: 31px; border-top: 1px solid #ccc; }
  .credit { position: absolute; right: 0; bottom: 0; display: flex; align-items: center; gap: 4px; padding: 0 5px; background: rgba(255, 255, 255, .8); color: #333; font-size: 15px; line-height: 21px; white-space: nowrap; }
  .credit svg { width: 15px; height: 10px; }
  .credit a { color: #0078a8; text-decoration: none; }

  .sea { fill: #aad3df; }
  .land { fill: #f2efe9; stroke: #b3a3b8; stroke-width: 1; }
  .marsh { fill: #eff2dc; }
  .wood { fill: #b9d8ac; opacity: .85; }
  .scrub { fill: #cdebb0; opacity: .85; }
  polyline, .maritime, .reserve { fill: none; stroke-linejoin: round; }
  .park { stroke: #9ccb9f; stroke-width: 1; }
  .river { stroke: #a5d2e2; stroke-width: 1; }
  .yellow { stroke: #f6c57a; stroke-width: 1; }
  .olive { stroke: #b0a552; stroke-width: 1; }
  .orange { stroke: #f89c7e; stroke-width: 1; }
  .red { stroke: #e0567a; stroke-width: 1.200; }
  .rail { stroke: #7c7c7c; stroke-width: 1; }
  .limit { stroke: #bfa9c4; stroke-width: 1; }
  .frontier { stroke: #9c88ab; stroke-width: 3; }
  .ferry { stroke: #86a2ec; stroke-width: 1; stroke-dasharray: 5 4; opacity: .9; }
  .maritime { stroke: #9a8cac; stroke-width: 2.500; }
  .reserve { stroke: #85c3ad; stroke-width: 1; }
  .place { font-family: "Noto Sans", "DejaVu Sans", sans-serif; text-anchor: middle; paint-order: stroke; stroke: rgba(255, 255, 255, .7); stroke-width: 2px; fill: #333; }
  .town { font-size: 10px; }
  .city { font-size: 13px; }
  .state { font-size: 13px; fill: #7a4a86; }
  .area { font-size: 10px; font-style: italic; fill: #138213; }
  .range { fill: #30a5ff; fill-opacity: .5; stroke: #00f; stroke-width: 3; }
</style>
